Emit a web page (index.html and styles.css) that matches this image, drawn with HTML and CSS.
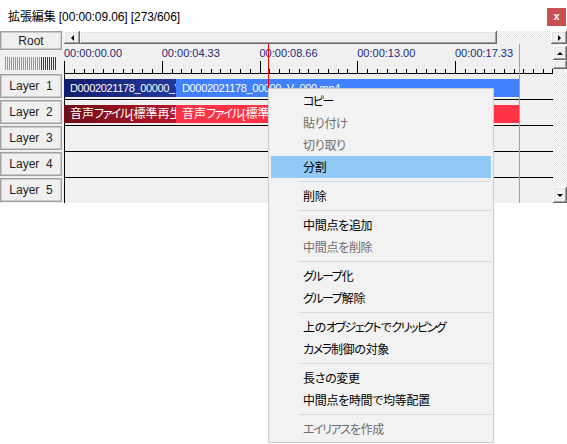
FILE: index.html
```html
<!DOCTYPE html>
<html lang="ja">
<head>
<meta charset="utf-8">
<title>拡張編集</title>
<link rel="stylesheet" href="styles.css">
</head>
<body>
<div class="window">
  <header class="titlebar">
    <span class="title">拡張編集 [00:00:09.06] [273/606]</span>
    <span class="close">x</span>
  </header>
  <div class="editor">
    <aside class="side">
      <div class="btn root">Root</div>
      <div class="meter"><span class="meter-lo"></span><span class="meter-hi"></span></div>
      <div class="layer-list">
        <div class="btn layer">Layer  1</div>
        <div class="btn layer">Layer  2</div>
        <div class="btn layer">Layer  3</div>
        <div class="btn layer">Layer  4</div>
        <div class="btn layer">Layer  5</div>
      </div>
    </aside>
    <div class="hscroll">
      <div class="sb-btn hbtn"><span class="arrow-left"></span></div>
      <div class="sb-btn hthumb"></div>
      <div class="track"></div>
      <div class="sb-btn hbtn"><span class="arrow-right"></span></div>
    </div>
    <div class="timeline">
      <div class="ruler">
        <div class="labels">
          <span>00:00:00.00</span><span>00:00:04.33</span><span>00:00:08.66</span><span>00:00:13.00</span><span>00:00:17.33</span>
        </div>
        <svg class="ticks" width="489" height="12" viewBox="0 0 489 12">
          <path d="M0.5 0v12M98.5 0v12M196.5 0v12M293.5 0v12M391.5 0v12
          M10.5 8v4M20.5 8v4M29.5 8v4M39.5 8v4M49.5 8v4M59.5 8v4M68.5 8v4M78.5 8v4M88.5 8v4
          M108.5 8v4M117.5 8v4M127.5 8v4M137.5 8v4M147.5 8v4M156.5 8v4M166.5 8v4M176.5 8v4M186.5 8v4
          M205.5 8v4M215.5 8v4M225.5 8v4M235.5 8v4M244.5 8v4M254.5 8v4M264.5 8v4M274.5 8v4M283.5 8v4
          M303.5 8v4M313.5 8v4M323.5 8v4M332.5 8v4M342.5 8v4M352.5 8v4M362.5 8v4M371.5 8v4M381.5 8v4
          M401.5 8v4M411.5 8v4M420.5 8v4M430.5 8v4M440.5 8v4M450.5 8v4M459.5 8v4M469.5 8v4M479.5 8v4M488.5 8v4"
          stroke="#000" stroke-width="1" fill="none" shape-rendering="crispEdges"/>
        </svg>
      </div>
      <div class="row">
        <div class="clip video-a" style="width:112px">D0002021178_00000_V_000.mp4</div>
        <div class="clip video-b" style="width:343px">D0002021178_00000_V_000.mp4</div>
      </div>
      <div class="row">
        <div class="clip audio-a" style="width:112px">音声<span class="kana">ファイル</span>[標準再生]</div>
        <div class="clip audio-b" style="width:343px">音声<span class="kana">ファイル</span>[標準再生]</div>
      </div>
      <div class="row"></div>
      <div class="row"></div>
      <div class="row"></div>
    </div>
    <div class="vscroll">
      <div class="sb-btn vbtn"><span class="arrow-up"></span></div>
      <div class="sb-btn vthumb"></div>
      <div class="vtrack"></div>
      <div class="sb-btn vbtn down"><span class="arrow-down"></span></div>
    </div>
  </div>
</div>

<div class="menu">
  <div class="item"><span class="kana">コピー</span></div>
  <div class="item disabled">貼り付け</div>
  <div class="item disabled">切り取り</div>
  <div class="item hover">分割</div>
  <div class="sep"></div>
  <div class="item">削除</div>
  <div class="sep"></div>
  <div class="item">中間点を追加</div>
  <div class="item disabled">中間点を削除</div>
  <div class="sep"></div>
  <div class="item"><span class="kana">グループ</span>化</div>
  <div class="item"><span class="kana">グループ</span>解除</div>
  <div class="sep"></div>
  <div class="item">上の<span class="kana">オブジェクト</span>で<span class="kana">クリッピング</span></div>
  <div class="item"><span class="kana">カメラ</span>制御の対象</div>
  <div class="sep"></div>
  <div class="item">長さの変更</div>
  <div class="item">中間点を時間で均等配置</div>
  <div class="sep"></div>
  <div class="item disabled"><span class="kana">エイリアス</span>を作成</div>
</div>
</body>
</html>
```
FILE: styles.css
```css
* { box-sizing: border-box; }
html, body { margin: 0; padding: 0; }
body {
  width: 567px;
  height: 444px;
  background: #fff;
  font-family: "Liberation Sans", "Noto Sans CJK JP", sans-serif;
  position: relative;
  overflow: hidden;
}

.titlebar {
  height: 31px;
  display: flex;
  align-items: center;
  justify-content: space-between;
  padding: 0 1px 0 8px;
  background: #fff;
}
.title { font-size: 12px; color: #000; letter-spacing: -0.1px; }
.close {
  align-self: flex-start;
  margin-top: 8px;
  width: 19px;
  height: 18px;
  background: #c75050;
  color: #fff;
  font: bold 11px/17px "Liberation Sans", sans-serif;
  text-align: center;
}

.editor {
  display: grid;
  grid-template-columns: 64px 489px 14px;
  grid-template-rows: 13px 29px 130px;
  background: #f0f0f0;
}

/* left column */
.side {
  grid-column: 1;
  grid-row: 1 / 4;
  display: flex;
  flex-direction: column;
}
.btn {
  width: 62px;
  background: #f0f0f0;
  border: 1px solid #a0a0a0;
  box-shadow: inset 0 0 0 1px #c9c9c9;
  font-size: 12px;
  color: #1e1e1e;
  display: flex;
  align-items: center;
  justify-content: center;
  white-space: pre;
}
.root { height: 19px; }
.meter {
  margin: 7px 0 0 5px;
  width: 51px;
  height: 13px;
  display: flex;
}
.meter-lo {
  width: 36px;
  background: repeating-linear-gradient(90deg, #6c9ee6 0 1px, transparent 1px 2px);
}
.meter-hi {
  width: 15px;
  background: repeating-linear-gradient(90deg, #2b3c6c 0 1px, transparent 1px 2px);
}
.layer-list {
  margin-top: 3px;
  display: flex;
  flex-direction: column;
}
.layer { height: 24px; margin: 1px 0; }

/* scrollbars */
.sb-btn {
  background: #f0f0f0;
  box-shadow: inset -1px -1px #696969, inset 1px 1px #fff, inset -2px -2px #a0a0a0, inset 2px 2px #e3e3e3;
  display: flex;
  align-items: center;
  justify-content: center;
}
.hscroll {
  grid-column: 2 / 4;
  grid-row: 1;
  display: flex;
}
.hbtn { width: 16px; }
.hthumb { width: 417px; }
.track, .vtrack {
  flex: 1;
  background: repeating-conic-gradient(#ffffff 0 25%, #e4e4e4 0 50%) 0 0 / 2px 2px;
}
.vscroll {
  grid-column: 3;
  grid-row: 2 / 4;
  display: flex;
  flex-direction: column;
  padding-top: 2px;
  background: repeating-conic-gradient(#ffffff 0 25%, #e4e4e4 0 50%) 0 0 / 2px 2px;
}
.vbtn { height: 14px; }
.vbtn.down { height: 16px; }
.vthumb { height: 9px; }

.arrow-left, .arrow-right, .arrow-up, .arrow-down { width: 0; height: 0; }
.arrow-left { border-right: 3px solid #000; border-top: 3px solid transparent; border-bottom: 3px solid transparent; }
.arrow-right { border-left: 3px solid #000; border-top: 3px solid transparent; border-bottom: 3px solid transparent; }
.arrow-up { border-bottom: 3px solid #000; border-left: 3px solid transparent; border-right: 3px solid transparent; }
.arrow-down { border-top: 3px solid #000; border-left: 3px solid transparent; border-right: 3px solid transparent; }

/* timeline */
.timeline {
  grid-column: 2;
  grid-row: 2 / 4;
  position: relative;
  display: flex;
  flex-direction: column;
}
.timeline::before {
  content: "";
  position: absolute;
  left: 455px;
  top: 0;
  bottom: 0;
  width: 1px;
  background: #a0a0a0;
}
.timeline::after {
  content: "";
  position: absolute;
  left: 204px;
  top: 0;
  bottom: 0;
  width: 1px;
  background: #ff0000;
}
.ruler {
  height: 29px;
  display: flex;
  flex-direction: column;
  justify-content: space-between;
}
.labels {
  display: flex;
  padding-top: 3px;
  font-size: 11px;
  line-height: 13px;
  color: #1e2a78;
}
.labels span { flex: 0 0 97.75px; white-space: nowrap; }
.ticks { display: block; }

.row {
  height: 26px;
  border-top: 1px solid #000;
  box-shadow: inset 1px 0 #000;
  padding-top: 5px;
  display: flex;
  align-items: flex-start;
}
.clip {
  height: 18px;
  flex: 0 0 auto;
  color: #fff;
  font-size: 11px;
  line-height: 18px;
  letter-spacing: -0.35px;
  padding-left: 6px;
  overflow: hidden;
  white-space: nowrap;
  font-feature-settings: "palt";
}
.audio-a, .audio-b { font-size: 12px; letter-spacing: 0; }
.video-a { background: linear-gradient(90deg, #131e6c, #21399e); }
.video-b { background: #4181fd; }
.audio-a { background: linear-gradient(90deg, #6c0e18, #b8182a); }
.audio-b { background: #fe3446; }

.kana { letter-spacing: -1.5px; margin-right: 0.5px; }

/* context menu */
.menu {
  position: absolute;
  left: 268px;
  top: 88px;
  width: 226px;
  background: #f2f2f2;
  border: 1px solid #cccccc;
  padding: 1px 2px 2px;
  font-family: "Noto Sans CJK JP", sans-serif;
  font-size: 12px;
  letter-spacing: -0.3px;
  font-feature-settings: "palt";
}
.item {
  height: 22px;
  line-height: 22px;
  padding-left: 32px;
  color: #000;
  white-space: nowrap;
}
.item.disabled { color: #6d6d6d; }
.item.hover { background: #91c9f7; }
.sep {
  height: 7px;
  padding-top: 3px;
  margin-left: 28px;
}
.sep::before {
  content: "";
  display: block;
  height: 1px;
  background: #d7d7d7;
}
```
